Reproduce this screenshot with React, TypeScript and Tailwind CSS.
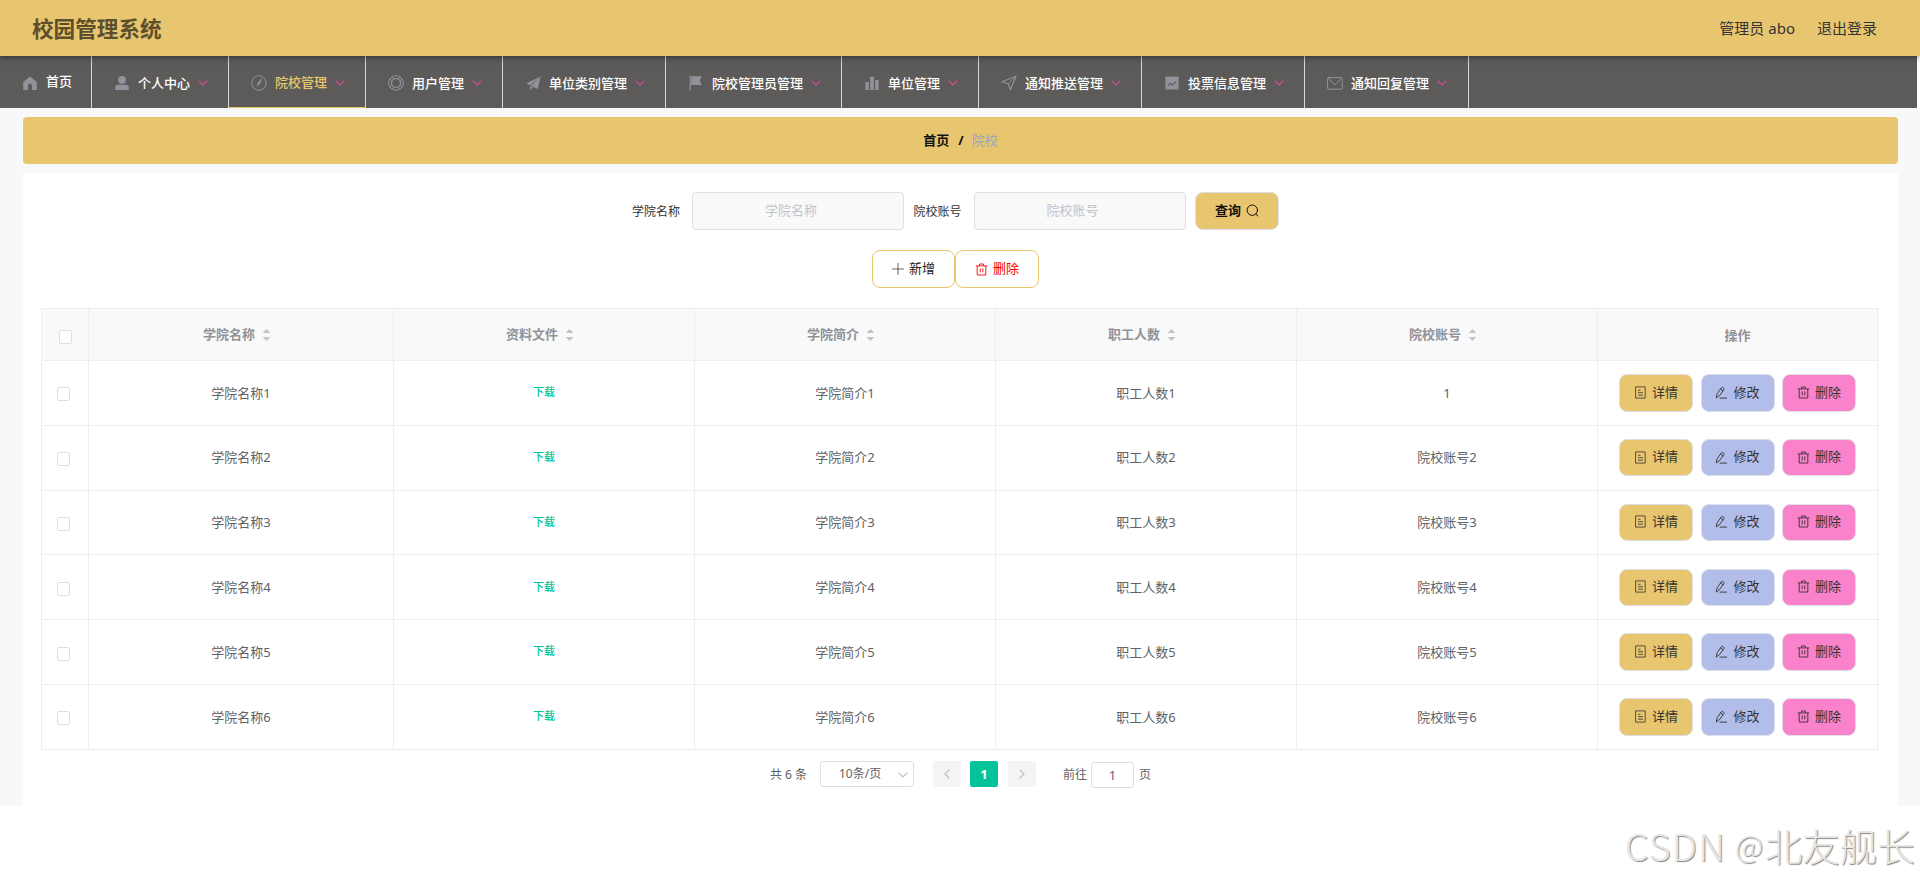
import type { ReactNode } from "react";
import clsx from "clsx";

const stroke = {
  fill: "none",
  stroke: "currentColor",
  strokeLinecap: "round" as const,
  strokeLinejoin: "round" as const,
};

const HomeIcon = () => (
  <svg width="14" height="14" viewBox="0 0 14 14" fill="currentColor">
    <path d="M7 .4 .2 6v8H5V9.5a2 2 0 0 1 4 0V14h4.8V6z" />
  </svg>
);

const UserIcon = () => (
  <svg width="14" height="14" viewBox="0 0 14 14" fill="currentColor">
    <circle cx="7" cy="3.9" r="3.9" />
    <path d="M3 8.8h8a2.8 2.8 0 0 1 2.8 2.8V14H.2v-2.4A2.8 2.8 0 0 1 3 8.8z" />
  </svg>
);

const CompassIcon = () => (
  <svg width="16" height="16" viewBox="0 0 16 16" {...stroke}>
    <circle cx="8" cy="8" r="7.3" />
    <path d="M10.9 3.6 7.2 7.4l-1.3 4.2 3.2-3z" fill="currentColor" strokeWidth=".4" />
  </svg>
);

const HelpIcon = () => (
  <svg width="16" height="16" viewBox="0 0 16 16" {...stroke}>
    <circle cx="8" cy="8" r="7.3" />
    <circle cx="8" cy="8" r="4.5" strokeWidth="1.2" />
    <path d="M4.2 1.9 6 4.2M11.8 1.9 10 4.2M4.2 14.1 6 11.8M11.8 14.1 10 11.8M1.9 4.2 4.2 6M1.9 11.8 4.2 10M14.1 4.2 11.8 6M14.1 11.8 11.8 10" strokeWidth=".9" />
  </svg>
);

const PromotionIcon = () => (
  <svg width="15" height="15" viewBox="0 0 15 15" fill="currentColor">
    <path d="M14.6.6.4 7.2l3.5 2.2zM14.6.6 4.9 9.7l6.9 3.3zM4 9.9v4.6l2.9-3.3z" />
  </svg>
);

const FlagIcon = () => (
  <svg width="14" height="16" viewBox="0 0 14 16" fill="currentColor">
    <path d="M.6.6h1.2v15H.6zM2.2 1.2H13l-2.3 4.3L13 9.9H2.2z" />
  </svg>
);

const DataIcon = () => (
  <svg width="14" height="14" viewBox="0 0 14 14" fill="currentColor">
    <path d="M.4 6h3.4v8H.4zM5.2.8h3.6V14H5.2zM10.2 4h3.4v10h-3.4z" />
  </svg>
);

const PositionIcon = () => (
  <svg width="16" height="16" viewBox="0 0 16 16" {...stroke}>
    <path d="M15 1.2 1 6.8l6.2 1.9 2.2 6z" strokeWidth="1.2" />
    <path d="M14.4 1.8 7.2 8.7" strokeWidth=".8" />
  </svg>
);

const MarketingIcon = () => (
  <svg width="14" height="14" viewBox="0 0 14 14">
    <path d="M.4.6h13.2v12.9H.4z" fill="currentColor" />
    <path d="m3 9.7 2.5-2.5 2 1.9 3.6-3.8" fill="none" stroke="#5d5b59" strokeWidth="1.1" />
  </svg>
);

const MessageIcon = () => (
  <svg width="16" height="13" viewBox="0 0 16 13" {...stroke}>
    <rect x=".6" y=".6" width="14.6" height="11.6" rx="1" />
    <path d="m1.6 1.4 4.8 5.2a2 2 0 0 0 3 0l4.8-5.2" />
  </svg>
);

const ArrowDown = ({ size = 10 }: { size?: number }) => (
  <svg width={size} height={size} viewBox="0 0 10 10" {...stroke}>
    <path d="m1 3 4 4 4-4" strokeWidth="1.1" />
  </svg>
);

const DeleteIcon = () => (
  <svg width="13" height="13" viewBox="0 0 13 13" {...stroke} strokeLinecap="butt">
    <path d="M.8 2.9h11.4M4.5 2.7V1h4v1.7M2.2 3v9h8.6V3M5.2 5.4v4M7.8 5.4v4" strokeWidth=".9" />
  </svg>
);

const EditIcon = () => (
  <svg width="13" height="13" viewBox="0 0 13 13" {...stroke}>
    <path d="M2.4 7.4 6.5 1.6q.4-.6 1-.2l1.3.9q.6.4.2 1L4.9 9.2l-3.4 2.6zM5.6 3l2.4 1.7M5 12.1h6.6" strokeWidth=".9" />
  </svg>
);

const TicketsIcon = () => (
  <svg width="13" height="13" viewBox="0 0 13 13" {...stroke} strokeLinecap="butt">
    <path d="M1.6.9h9.6v11.2H1.6zM4 4.3h2.5M4 6.7h5M4 9.2h5" strokeWidth=".8" />
  </svg>
);

const menus: { name: string; icon: ReactNode; width: string; active?: boolean }[] = [
  { name: "个人中心", icon: <UserIcon />, width: "w-[137px]" },
  { name: "院校管理", icon: <CompassIcon />, width: "w-[137px]", active: true },
  { name: "用户管理", icon: <HelpIcon />, width: "w-[137px]" },
  { name: "单位类别管理", icon: <PromotionIcon />, width: "w-[163px]" },
  { name: "院校管理员管理", icon: <FlagIcon />, width: "w-[176px]" },
  { name: "单位管理", icon: <DataIcon />, width: "w-[137px]" },
  { name: "通知推送管理", icon: <PositionIcon />, width: "w-[163px]" },
  { name: "投票信息管理", icon: <MarketingIcon />, width: "w-[163px]" },
  { name: "通知回复管理", icon: <MessageIcon />, width: "w-[164px]" },
];

const columns = ["学院名称", "资料文件", "学院简介", "职工人数", "院校账号"];

const rows = [1, 2, 3, 4, 5, 6].map((n) => ({
  id: n,
  name: `学院名称${n}`,
  intro: `学院简介${n}`,
  staff: `职工人数${n}`,
  account: n === 1 ? "1" : `院校账号${n}`,
}));

const grid = "grid grid-cols-[47px_305px_301px_301px_301px_301px_280px]";
const cell = "flex items-center justify-center border-r border-[#ebeef5]";

function Checkbox() {
  return <span className="block h-3.5 w-[13px] rounded-xs border border-[#dcdfe6] bg-white" />;
}

function SortCaret() {
  return (
    <svg width="24" height="14" viewBox="0 0 24 14" fill="#c0c4cc">
      <path d="m11.5 1 4 4h-8zM11.5 13l-4-4h8z" />
    </svg>
  );
}

function ActionButton({ className, icon, children }: { className: string; icon: ReactNode; children: ReactNode }) {
  return (
    <button
      className={clsx(
        "flex h-[37.4px] w-[74px] items-center justify-center gap-[5px] rounded-lg border border-[#dcdfe6] pb-px text-[13px] text-[#333]",
        className
      )}
    >
      {icon}
      {children}
    </button>
  );
}

function Header() {
  return (
    <header className="relative z-10 flex h-14 items-center justify-between bg-[#e8c66f] pr-[43px] pl-8 shadow-[0_1px_6px_rgba(0,0,0,0.5)]">
      <h1 className="pt-0.5 text-[21.6px] font-bold text-[#5d4f2c]">校园管理系统</h1>
      <div className="flex gap-[22px] text-[15px] text-[#333]">
        <span>管理员 abo</span>
        <span>退出登录</span>
      </div>
    </header>
  );
}

function Nav() {
  return (
    <nav className="mr-[3px] flex h-13 bg-[#5d5b59] text-[13px] font-medium text-white">
      <div className="flex w-23 items-center border-r border-[#d8d8d8] pl-[18px]">
        <span className="flex w-6 justify-center pt-0.5 text-[#909399]">
          <HomeIcon />
        </span>
        <span className="ml-1">首页</span>
      </div>
      {menus.map((m) => (
        <div
          key={m.name}
          className={clsx(
            "flex items-center border-r border-r-[#d8d8d8] pl-[18px]",
            m.width,
            m.active && "border-b border-b-[#e8c66f] text-[#e8c66f]"
          )}
        >
          <span className="flex w-6 justify-center pt-0.5 text-[#909399]">{m.icon}</span>
          <span className="ml-1 pt-[3px] whitespace-nowrap">{m.name}</span>
          <span className="ml-2 pt-0.5 text-[#d24d97]">
            <ArrowDown />
          </span>
        </div>
      ))}
    </nav>
  );
}

function SearchForm() {
  return (
    <div className="flex h-[38px] items-center pl-[609px] text-xs text-[#333]">
      <label className="w-[60px] shrink-0 pt-px">学院名称</label>
      <input
        className="h-[38px] w-[212px] rounded-sm border border-[#dcdfe6] bg-[#f9f9f9] pr-[26px] pb-0.5 pl-3 text-center text-[13px] placeholder:text-[#c0c4cc]"
        placeholder="学院名称"
      />
      <label className="ml-[9.5px] w-[60.5px] shrink-0 pt-px">院校账号</label>
      <input
        className="h-[38px] w-[212px] rounded-sm border border-[#dcdfe6] bg-[#f9f9f9] pr-[27px] pb-0.5 pl-3 text-center text-[13px] placeholder:text-[#c0c4cc]"
        placeholder="院校账号"
      />
      <button className="ml-[9px] flex h-[38px] w-[84px] items-center justify-center gap-[5px] rounded-lg border border-[#dcdfe6] bg-[#e8c66f] pb-px text-[13px] font-bold text-[#111]">
        查询
        <svg width="13" height="13" viewBox="0 0 13 13" {...stroke}>
          <circle cx="6.3" cy="6.2" r="5.2" />
          <path d="m10 10 1.8 2" />
        </svg>
      </button>
    </div>
  );
}

function Toolbar() {
  return (
    <div className="mt-5 flex pl-[849px] text-[13px]">
      <button className="flex h-[38px] w-[83px] items-center justify-center gap-[5px] rounded-lg border border-[#e8c66f] text-[#222]">
        <svg width="12" height="12" viewBox="0 0 12 12" {...stroke}>
          <path d="M6 .5v11M.5 6h11" strokeWidth=".7" />
        </svg>
        新增
      </button>
      <button className="flex h-[38px] w-[84px] items-center justify-center gap-[5px] rounded-lg border border-[#e8c66f] text-[#f00]">
        <DeleteIcon />
        删除
      </button>
    </div>
  );
}

function DataTable() {
  return (
    <div className="mx-[18px] mt-5 w-[1838px] border-t border-l border-[#ebeef5] text-[13px] text-[#606266]">
      <div className={clsx(grid, "h-[52px] border-b border-[#ebeef5] bg-[#f9f9f9] font-bold text-[#909399]")}>
        <div className={clsx(cell, "pt-1")}>
          <Checkbox />
        </div>
        {columns.map((c) => (
          <div key={c} className={cell}>
            {c}
            <SortCaret />
          </div>
        ))}
        <div className={clsx(cell, "pt-0.5")}>操作</div>
      </div>
      {rows.map((r) => (
        <div key={r.id} className={clsx(grid, "h-[64.8px] border-b border-[#ebeef5]")}>
          <div className={clsx(cell, "pt-[3px] pr-[3px]")}>
            <Checkbox />
          </div>
          <div className={clsx(cell, "pt-px")}>{r.name}</div>
          <div className={clsx(cell, "pb-px text-[11px] font-medium text-[#04c398]")}>下载</div>
          <div className={clsx(cell, "pt-px")}>{r.intro}</div>
          <div className={clsx(cell, "pt-px")}>{r.staff}</div>
          <div className={clsx(cell, "pt-px")}>{r.account}</div>
          <div className={clsx(cell, "gap-[7.6px]")}>
            <ActionButton className="bg-[#e8c66f]" icon={<TicketsIcon />}>
              详情
            </ActionButton>
            <ActionButton className="bg-[#b2bee9]" icon={<EditIcon />}>
              修改
            </ActionButton>
            <ActionButton className="bg-[#f982cb]" icon={<DeleteIcon />}>
              删除
            </ActionButton>
          </div>
        </div>
      ))}
    </div>
  );
}

function Pagination() {
  return (
    <div className="mt-[11px] flex h-[27px] items-center pl-[747px] text-xs text-[#606266]">
      <span className="w-[50px] pt-px">共 6 条</span>
      <div className="flex h-[26px] w-[94px] items-center justify-between rounded-[3px] border border-[#dcdfe6] pr-[5px] pl-[18px]">
        10条/页
        <span className="pt-0.5 text-[#c0c4cc]">
          <ArrowDown />
        </span>
      </div>
      <div className="ml-[19px] flex h-[26px] gap-[9px] text-[#c0c4cc]">
        <span className="flex w-7 items-center justify-center rounded-xs bg-[#f4f4f5]">
          <svg width="10" height="10" viewBox="0 0 10 10" {...stroke}>
            <path d="M7 1 3 5l4 4" strokeWidth="1.4" />
          </svg>
        </span>
        <span className="flex w-7 items-center justify-center rounded-xs bg-[#04c398] pt-px text-[13px] font-bold text-white">1</span>
        <span className="ml-px flex w-7 items-center justify-center rounded-xs bg-[#f4f4f5]">
          <svg width="10" height="10" viewBox="0 0 10 10" {...stroke}>
            <path d="m3 1 4 4-4 4" strokeWidth="1.4" />
          </svg>
        </span>
      </div>
      <span className="ml-[27px] w-7 pt-px">前往</span>
      <span className="mt-0.5 flex h-[26px] w-[43px] items-center justify-center rounded-[3px] border border-[#dcdfe6] text-[13px]">1</span>
      <span className="ml-[5px] pt-px">页</span>
    </div>
  );
}

export default function App() {
  return (
    <div className="relative h-[879px] overflow-hidden bg-white font-['Noto_Sans','Noto_Sans_CJK_SC',sans-serif]" lang="zh-CN">
      <Header />
      <Nav />
      <main className="h-[698px] bg-[#f7f8fa] px-[23px] pt-[9px]">
        <div className="flex h-[47px] w-[1875px] items-center justify-center rounded-sm bg-[#e8c66f] text-[13px]">
          <span className="font-bold text-[#111]">首页</span>
          <span className="mr-2 ml-[9px] font-bold text-[#111]">/</span>
          <span className="text-[#97a8be]">院校</span>
        </div>
        <section className="mt-[9px] h-[633px] w-[1875px] bg-white pt-[19px]">
          <SearchForm />
          <Toolbar />
          <DataTable />
          <Pagination />
        </section>
      </main>
      <div className="absolute top-[818px] left-[1625px] flex items-center font-['Noto_Sans_CJK_SC',sans-serif] text-[37.5px] leading-[54px] font-light whitespace-nowrap text-[#e6e6e6] [text-shadow:1px_1px_1px_#888]">
        <span className="tracking-[1.2px]">CSDN</span>
        <span className="ml-[9px] w-[30px] text-[31px]">@</span>
        <span>北友舰长</span>
      </div>
    </div>
  );
}
